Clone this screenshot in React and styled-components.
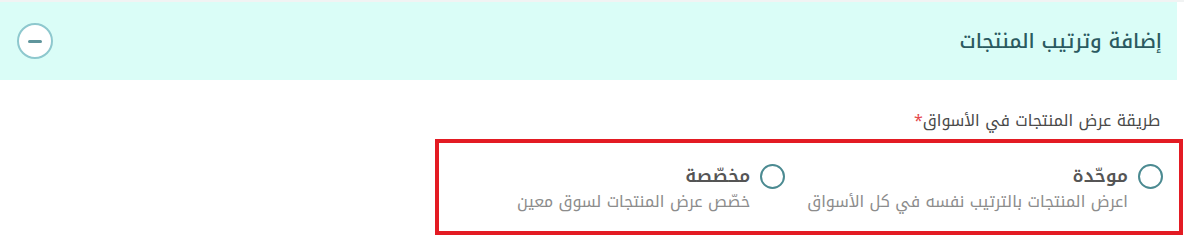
import React from "react";
import styled, { createGlobalStyle } from "styled-components";

const Global = createGlobalStyle`
  html, body { margin: 0; padding: 0; background: #ffffff; }
  body { font-family: "Noto Kufi Arabic", "Noto Sans Arabic", "DejaVu Sans", sans-serif; }
  * { box-sizing: border-box; }
`;

const Page = styled.div`
  width: 1184px;
  height: 246px;
  border-top: 2px solid #f1f3f3;
  overflow: hidden;
`;

const Section = styled.section`
  width: 1177px;
  direction: rtl;
`;

const Header = styled.div`
  height: 78px;
  background: #dafdf7;
  display: flex;
  align-items: center;
  justify-content: space-between;
  padding: 0 15px 0 17px;
`;

const Title = styled.h2`
  margin: 0;
  font-size: 20px;
  font-weight: 500;
  line-height: 28px;
  color: #2b5a60;
`;

const ToggleButton = styled.button`
  width: 36px;
  height: 36px;
  border-radius: 50%;
  border: 2px solid #8ec8ce;
  background: #ffffff;
  display: flex;
  align-items: center;
  justify-content: center;
  padding: 0;
  cursor: pointer;
`;

const MinusBar = styled.span`
  width: 14px;
  height: 3px;
  border-radius: 2px;
  background: #5f959c;
`;

const Body = styled.div`
  padding: 30px 17px 0 0;
`;

const FieldLabel = styled.div`
  font-size: 16px;
  color: #4a4a4a;
  line-height: 22px;
`;

const Required = styled.span`
  color: #e5484d;
`;

const OptionsBox = styled.div`
  margin-top: 7px;
  margin-left: 435px;
  margin-right: -23px;
  height: 96px;
  border: 4px solid #e31b23;
  display: flex;
  gap: 22px;
  padding: 20px 16px 0 0;
`;

const Option = styled.label`
  display: flex;
  align-items: flex-start;
  gap: 10px;
  cursor: pointer;
`;

const Radio = styled.span`
  flex: none;
  width: 25px;
  height: 25px;
  margin-top: 1px;
  border-radius: 50%;
  border: 2px solid #4b8a91;
`;

const OptionText = styled.div`
  display: flex;
  flex-direction: column;
  gap: 1px;
`;

const OptionTitle = styled.span`
  font-size: 18px;
  font-weight: 600;
  color: #555555;
  line-height: 26px;
`;

const OptionDesc = styled.span`
  font-size: 16px;
  color: #8c8c8c;
  line-height: 24px;
`;

const options = [
  { title: "موحّدة", desc: "اعرض المنتجات بالترتيب نفسه في كل الأسواق" },
  { title: "مخصّصة", desc: "خصّص عرض المنتجات لسوق معين" },
];

export default function App() {
  return (
    <>
      <Global />
      <Page>
        <Section>
          <Header>
            <Title>إضافة وترتيب المنتجات</Title>
            <ToggleButton aria-label="طي">
              <MinusBar />
            </ToggleButton>
          </Header>
          <Body>
            <FieldLabel>
              طريقة عرض المنتجات في الأسواق<Required>*</Required>
            </FieldLabel>
            <OptionsBox>
              {options.map((o) => (
                <Option key={o.title}>
                  <Radio />
                  <OptionText>
                    <OptionTitle>{o.title}</OptionTitle>
                    <OptionDesc>{o.desc}</OptionDesc>
                  </OptionText>
                </Option>
              ))}
            </OptionsBox>
          </Body>
        </Section>
      </Page>
    </>
  );
}
